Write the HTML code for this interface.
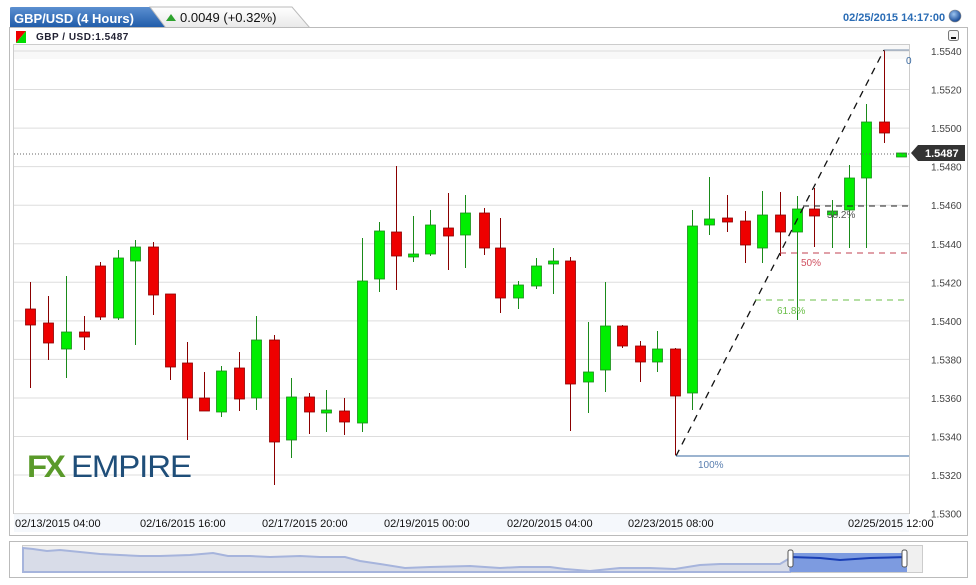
<!DOCTYPE html>
<html><head><meta charset="utf-8"><style>
body{margin:0;width:976px;height:585px;background:#fff;font-family:"Liberation Sans",sans-serif;overflow:hidden;position:relative}
.a{position:absolute}
</style></head><body>
<svg class="a" style="left:0;top:0" width="976" height="585" id="s" xmlns="http://www.w3.org/2000/svg">
<defs><linearGradient id="tab" x1="0" y1="0" x2="0" y2="1"><stop offset="0" stop-color="#5b8fd0"/><stop offset="1" stop-color="#1e5aa8"/></linearGradient>
<linearGradient id="tab2" x1="0" y1="0" x2="0" y2="1"><stop offset="0" stop-color="#fff"/><stop offset="1" stop-color="#e8e8e8"/></linearGradient>
<radialGradient id="ball" cx="0.4" cy="0.35" r="0.6"><stop offset="0" stop-color="#9cc4f0"/><stop offset="1" stop-color="#1d4f9a"/></radialGradient></defs>
<path d="M10 28 L10 8 Q10 7 12 7 L150 7 L166 28 Z" fill="url(#tab)"/>
<path d="M150 7 L292 7 L310 28 L166 28 Z" fill="url(#tab2)" stroke="#bbb"/>
<text x="14" y="23" font-size="13" font-weight="bold" fill="#fff">GBP/USD (4 Hours)</text>
<path d="M166 21 L171 14 L176 21 Z" fill="#2ea32e"/>
<text x="180" y="22" font-size="13" fill="#111">0.0049 (+0.32%)</text>
<text x="843" y="21" font-size="11" font-weight="bold" fill="#2a6cb5">02/25/2015 14:17:00</text>
<circle cx="955" cy="16" r="6" fill="url(#ball)" stroke="#888" stroke-width="0.6"/>
<rect x="9.5" y="27.5" width="958" height="508" fill="#fff" stroke="#bbb"/>
<path d="M16 31 L26 31 L16 43 Z" fill="#e00"/><path d="M26 31 L26 43 L16 43 Z" fill="#0d0"/>
<text x="36" y="40" font-size="10" font-weight="bold" fill="#223" letter-spacing="0.5">GBP / USD:1.5487</text>
<rect x="948.5" y="30.5" width="10" height="10" rx="2" fill="#f4f4f4" stroke="#777"/><rect x="951" y="37" width="5" height="2" fill="#111"/>
<rect x="13.5" y="44.5" width="896" height="469" fill="#fff" stroke="#ccc"/>
<rect x="14" y="45" width="895" height="14" fill="#f8f8f8"/>
<rect x="14" y="514" width="895" height="18" fill="#f5f8fc"/>
<g id="grid"></g>
<g id="c"></g>
<line x1="14" y1="154" x2="909" y2="154" stroke="#666" stroke-dasharray="1,2"/>
<path d="M676 456 L884 50" stroke="#111" stroke-width="1.3" stroke-dasharray="7,6" fill="none"/>
<line x1="676" y1="456" x2="909" y2="456" stroke="#3a6aa0"/>
<line x1="884" y1="50" x2="909" y2="50" stroke="#7a90aa"/>
<text x="906" y="64" font-size="10" fill="#3a6aa0">0</text>
<line x1="755" y1="300" x2="909" y2="300" stroke="#6bbf4a" stroke-dasharray="6,5"/>
<line x1="780" y1="253" x2="909" y2="253" stroke="#c04050" stroke-dasharray="6,5"/>
<line x1="803" y1="206" x2="909" y2="206" stroke="#222" stroke-dasharray="6,5"/>
<text x="698" y="468" font-size="10" fill="#5a7fb0">100%</text>
<text x="777" y="314" font-size="10" fill="#6bbf4a">61.8%</text>
<text x="801" y="266" font-size="10" fill="#d05060">50%</text>
<text x="827" y="218" font-size="10" fill="#555">38.2%</text>
<path d="M911 153 L918 145 L965 145 L965 161 L918 161 Z" fill="#333"/>
<text x="925" y="157" font-size="11" font-weight="bold" fill="#fff">1.5487</text>
<g transform="translate(27,477) scale(1.1,1.05)">
<text x="0" y="0" font-size="30" font-weight="bold" fill="#5a9a2a" letter-spacing="-3">FX</text>
<text x="40" y="0" font-size="30" fill="#1f4e79" letter-spacing="-1">EMPIRE</text></g>
<g font-size="11" fill="#111">
<text x="15" y="527">02/13/2015 04:00</text><text x="140" y="527">02/16/2015 16:00</text><text x="262" y="527">02/17/2015 20:00</text><text x="384" y="527">02/19/2015 00:00</text><text x="507" y="527">02/20/2015 04:00</text><text x="628" y="527">02/23/2015 08:00</text><text x="848" y="527">02/25/2015 12:00</text></g>
<rect x="9.5" y="541.5" width="958" height="36" fill="#fff" stroke="#bbb"/>
<rect x="22.5" y="545.5" width="900" height="27" fill="#f0f0f0" stroke="#ccc"/>
<path d="M23 572 L23 548 L33 549 L47 551 L60 550 L80 552 L100 554 L120 555 L140 556 L160 556 L190 555 L213 553 L228 556 L250 556 L270 557 L300 556 L320 557 L345 557 L360 561 L380 564 L405 568 L430 567 L470 566 L500 568 L520 567 L550 567 L565 569 L590 571 L620 568 L650 568 L675 569 L700 565 L720 564 L750 564 L780 564 L790 558 L790 572 Z" fill="#d8dce8" stroke="#a6b4dc" stroke-width="2"/>
<rect x="790" y="553" width="117" height="19" fill="#7d9be0"/>
<path d="M790 557 L820 558 L840 560 L870 558 L907 557" stroke="#1a3fb5" stroke-width="2" fill="none"/>
<rect x="788" y="550" width="5" height="17" rx="2" fill="#fff" stroke="#555"/>
<rect x="902" y="550" width="5" height="17" rx="2" fill="#fff" stroke="#555"/>
</svg>
<script>
var g=document.getElementById('grid'),c=document.getElementById('c'),h='',ns='';
for(var i=0;i<=12;i++){var y=51+i*38.55;var p=(1.554-i*0.002).toFixed(4);
h+='<line x1="14" y1="'+y+'" x2="909" y2="'+y+'" stroke="#ddd"/><text x="931" y="'+(y+4)+'" font-size="10" fill="#444">'+p+'</text>';}
g.innerHTML=h;
var d=[[30,0,309,325,282,388],[48,0,323,343,296,360],[66,1,332,349,276,378],[84,0,332,337,316,350],[100,0,266,317,262,320],[118,1,258,318,250,320],[135,1,247,261,240,345],[153,0,247,295,242,315],[170,0,294,367,294,380],[187,0,363,398,342,440],[204,0,398,411,372,411],[221,1,371,412,366,417],[239,0,368,399,352,411],[256,1,340,398,316,410],[274,0,340,442,335,485],[291,1,397,440,378,458],[309,0,397,412,393,434],[326,1,410,413,390,432],[344,0,411,422,398,435],[362,1,281,423,238,432],[379,1,231,279,222,292],[396,0,232,256,166,290],[413,1,254,257,216,262],[430,1,225,254,210,256],[448,0,228,236,193,270],[465,1,213,235,195,268],[484,0,213,248,208,255],[500,0,248,298,218,313],[518,1,285,298,281,309],[536,1,266,286,258,289],[553,1,261,264,248,294],[570,0,261,384,257,431],[588,1,372,382,322,413],[605,1,326,370,282,392],[622,0,326,346,325,348],[640,0,346,362,341,382],[657,1,349,362,331,372],[675,0,349,396,348,455],[692,1,226,393,210,410],[709,1,219,225,177,235],[727,0,218,222,195,232],[745,0,221,245,211,263],[762,1,215,248,191,263],[780,0,215,232,192,256],[797,1,209,232,196,320],[814,0,209,216,188,247],[832,1,211,215,200,248],[849,1,178,210,165,248],[866,1,122,178,104,248],[884,0,122,133,50,143],[901,1,153,157,153,157]];
d.forEach(function(k){var col=k[1]?'#00ee00':'#ee0000',st=k[1]?'#1a8a1a':'#8a0000';
ns+='<line x1="'+(k[0]+.5)+'" y1="'+k[4]+'" x2="'+(k[0]+.5)+'" y2="'+k[5]+'" stroke="'+st+'"/><rect x="'+(k[0]-4.5)+'" y="'+k[2]+'" width="10" height="'+Math.max(3,k[3]-k[2])+'" fill="'+col+'" stroke="'+st+'" stroke-width="0.8"/>';});
c.innerHTML=ns;
</script>
</body></html>
